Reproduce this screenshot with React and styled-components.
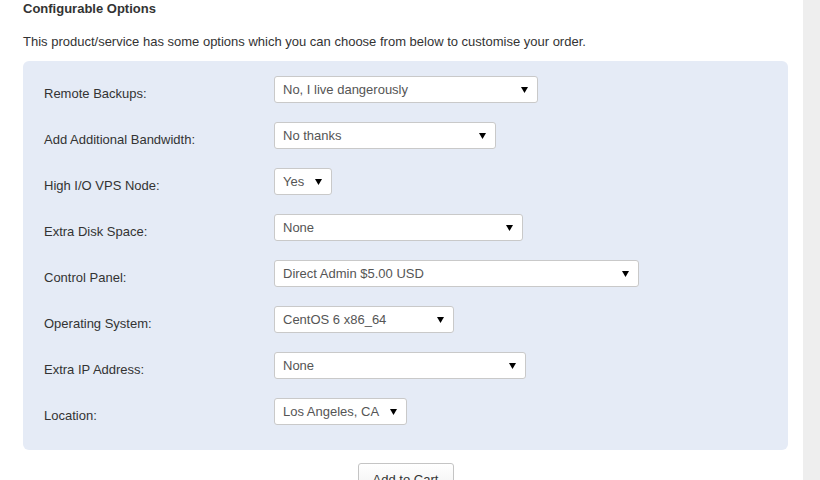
import React from "react";
import styled, { createGlobalStyle } from "styled-components";

const Global = createGlobalStyle`
  html, body { margin: 0; padding: 0; background: #fff; }
  body { font-family: "Liberation Sans", Arial, sans-serif; font-size: 13px; color: #333; }
`;

const Page = styled.div`
  display: flex;
  min-height: 480px;
`;

const Main = styled.main`
  width: 803px;
  box-sizing: border-box;
  padding: 0 15px 0 23px;
`;

const Aside = styled.aside`
  flex: 1;
  background: #eeeeee;
`;

const Title = styled.h3`
  margin: 0;
  font-size: 13px;
  line-height: 17px;
  font-weight: bold;
  color: #333;
`;

const Intro = styled.p`
  margin: 16px 0 0;
  line-height: 17px;
  color: #333;
`;

const Panel = styled.div`
  margin-top: 11px;
  background: #e5ebf6;
  border-radius: 6px;
  padding: 15px 21px 25px;
  display: flex;
  flex-direction: column;
  gap: 19px;
`;

const Row = styled.div`
  display: grid;
  grid-template-columns: 230px 1fr;
  align-items: start;
  height: 27px;
`;

const Label = styled.label`
  padding-top: 10px;
  line-height: 15px;
  color: #333;
`;

const SelectWrap = styled.div`
  position: relative;
  width: ${(p) => p.$w}px;
  height: 27px;
`;

const Select = styled.select`
  appearance: none;
  -webkit-appearance: none;
  width: 100%;
  height: 27px;
  box-sizing: border-box;
  border: 1px solid #c9c9c9;
  border-radius: 3px;
  background: #fff;
  padding: 0 24px 0 8px;
  font-family: "Liberation Sans", Arial, sans-serif;
  font-size: 13px;
  color: #555;
  outline: none;
`;

const Arrow = styled.svg`
  position: absolute;
  right: 10px;
  top: 11px;
  width: 7px;
  height: 6px;
  pointer-events: none;
`;

const Footer = styled.div`
  display: flex;
  justify-content: center;
  margin-top: 13px;
`;

const Button = styled.button`
  width: 96px;
  height: 28px;
  box-sizing: border-box;
  border: 1px solid #c4c4c4;
  border-radius: 3px;
  background: linear-gradient(#ffffff, #f2f2f2);
  font-family: "Liberation Sans", Arial, sans-serif;
  font-size: 13px;
  color: #333;
  padding: 6px 0 0;
  line-height: 16px;
  align-self: flex-start;
`;

const options = [
  { label: "Remote Backups:", value: "No, I live dangerously", w: 264 },
  { label: "Add Additional Bandwidth:", value: "No thanks", w: 222 },
  { label: "High I/O VPS Node:", value: "Yes", w: 58 },
  { label: "Extra Disk Space:", value: "None", w: 249 },
  { label: "Control Panel:", value: "Direct Admin $5.00 USD", w: 365 },
  { label: "Operating System:", value: "CentOS 6 x86_64", w: 180 },
  { label: "Extra IP Address:", value: "None", w: 252 },
  { label: "Location:", value: "Los Angeles, CA", w: 133 },
];

function Dropdown({ value, w }) {
  return (
    <SelectWrap $w={w}>
      <Select defaultValue={value}>
        <option>{value}</option>
      </Select>
      <Arrow viewBox="0 0 7 6">
        <path d="M0 0 H7 L3.5 6 Z" fill="#000" />
      </Arrow>
    </SelectWrap>
  );
}

export default function App() {
  return (
    <>
      <Global />
      <Page>
        <Main>
          <Title>Configurable Options</Title>
          <Intro>
            This product/service has some options which you can choose from below to customise your order.
          </Intro>
          <Panel>
            {options.map((o) => (
              <Row key={o.label}>
                <Label>{o.label}</Label>
                <Dropdown value={o.value} w={o.w} />
              </Row>
            ))}
          </Panel>
          <Footer>
            <Button>Add to Cart</Button>
          </Footer>
        </Main>
        <Aside />
      </Page>
    </>
  );
}
